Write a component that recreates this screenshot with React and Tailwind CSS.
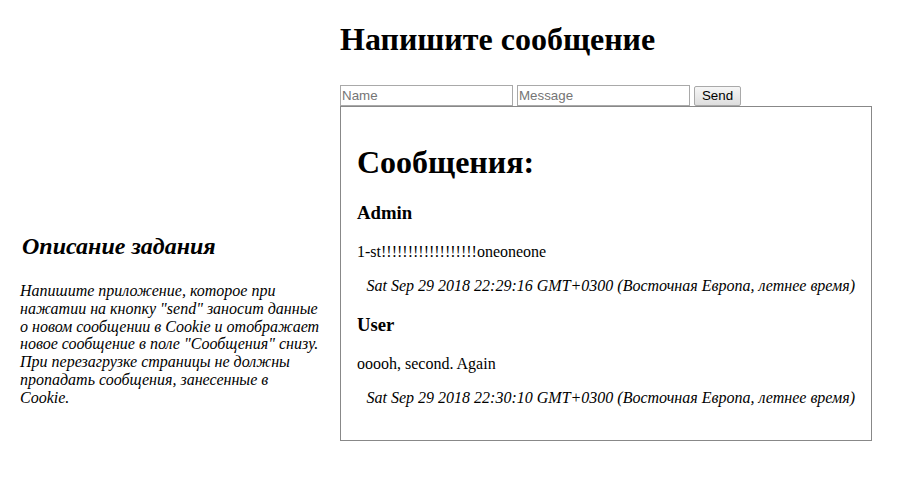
export default function App() {
  return (
    <div className="flex bg-white text-black font-['Liberation_Serif',serif] min-h-[481px]">
      <div className="w-[320px] shrink-0 pl-[20px] pt-[232px]">
        <h2 className="text-[24px] font-bold italic leading-[28px] mb-[22px] pl-[2px]">Описание задания</h2>
        <p className="text-[16px] italic leading-[17.8px] w-[302px]">
          Напишите приложение, которое при нажатии на кнопку "send" заносит данные о новом сообщении в Cookie и отображает новое сообщение в поле "Сообщения" снизу. При перезагрузке страницы не должны пропадать сообщения, занесенные в<br />Cookie.
        </p>
      </div>
      <div className="ml-[20px] w-[532px] shrink-0">
        <h1 className="text-[32px] font-bold leading-[37px] mt-[21px] mb-[27px]">Напишите сообщение</h1>
        <div className="flex items-end gap-[4px] font-['Liberation_Sans',Arial,sans-serif] text-[13.33px]">
          <input
            placeholder="Name"
            className="w-[173px] h-[21px] border border-[#a9a9a9] px-[1px] outline-none placeholder:text-[#757575]"
          />
          <input
            placeholder="Message"
            className="w-[173px] h-[21px] border border-[#a9a9a9] px-[1px] outline-none placeholder:text-[#757575]"
          />
          <button className="h-[20px] w-[47px] border border-[#a9a9a9] rounded-[2px] bg-gradient-to-b from-[#f6f6f6] to-[#dedede] text-black leading-none">
            Send
          </button>
        </div>
        <div className="border border-[#888888] px-[16px] pt-[16px] pb-[33px]">
          <h1 className="text-[32px] font-bold leading-[37px] mt-[21px] mb-[21px]">Сообщения:</h1>
          <h3 className="text-[18.72px] font-bold leading-[22px] mb-[19px]">Admin</h3>
          <p className="text-[16px] leading-[18px] mb-[16px]">1-st!!!!!!!!!!!!!!!!!!oneoneone</p>
          <p className="text-[16px] italic text-right leading-[18px] mb-[19px]">Sat Sep 29 2018 22:29:16 GMT+0300 (Восточная Европа, летнее время)</p>
          <h3 className="text-[18.72px] font-bold leading-[22px] mb-[19px]">User</h3>
          <p className="text-[16px] leading-[18px] mb-[16px]">ooooh, second. Again</p>
          <p className="text-[16px] italic text-right leading-[18px]">Sat Sep 29 2018 22:30:10 GMT+0300 (Восточная Европа, летнее время)</p>
        </div>
      </div>
    </div>
  );
}
